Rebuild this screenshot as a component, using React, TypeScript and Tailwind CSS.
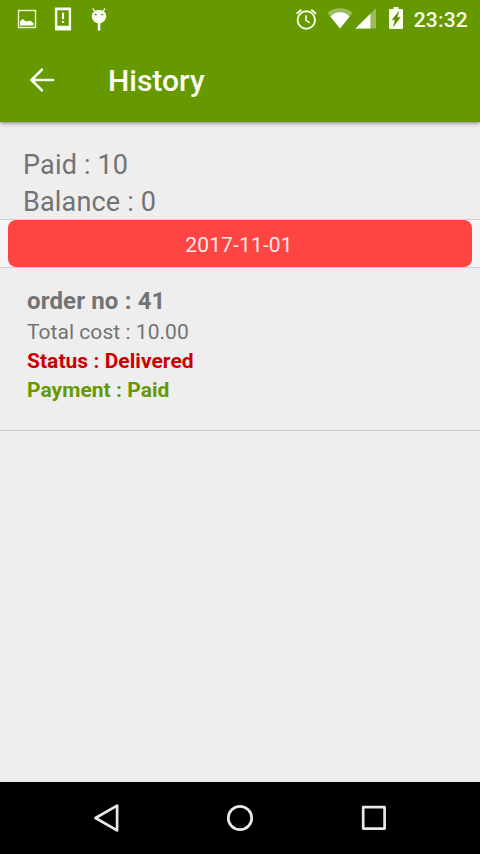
import type { ReactNode } from 'react'

interface Order {
    id: number
    total: string
    status: string
    payment: string
}

const orders: Order[] = [{ id: 41, total: '10.00', status: 'Delivered', payment: 'Paid' }]

function ImageIcon() {
    return (
        <svg width="36" height="36" viewBox="0 0 36 36" fill="none">
            <rect x="9.5" y="10.5" width="17" height="17" stroke="#eef8d8" strokeWidth="1.4" />
            <path d="M11 25.500v-3.500q1.300-3.200 3.200-2.800 1.400.2 2 2.200 1.300-.9 2.200 0l2.600-1 3.500 2.500v2.600z" fill="#fbfff2" />
        </svg>
    )
}

function DeviceAlertIcon() {
    return (
        <svg width="36" height="36" viewBox="0 0 36 36" fill="#fbfff2">
            <path fillRule="evenodd" d="M10.500 7.500h15a.6.6 0 0 1 .6.6v21.800a.6.6 0 0 1-.6.6h-15a.6.6 0 0 1-.6-.6V8.100a.6.6 0 0 1 .6-.6zM12.300 10.200v15.600h11.400V10.200z" />
            <path d="M17 12.800h2.100v6.500H17zM17 20.900h2.100V23H17z" />
        </svg>
    )
}

function DebugIcon() {
    return (
        <svg width="36" height="36" viewBox="0 0 36 36">
            <path d="M11.600 8.300l2.600 3.500M24.200 8.300l-2.600 3.500" stroke="#fbfff2" strokeWidth="1.200" />
            <path d="M18 9.900c4.300 0 7.200 2.500 7.200 6.200s-3 7.400-7.200 7.400-7.200-3.700-7.200-7.400 2.900-6.200 7.200-6.200z" fill="#fbfff2" />
            <path d="M16.800 23h2.500v7.600h-2.500z" fill="#fbfff2" />
            <path d="M13.700 14h2v1.200h-2zM20.200 14h2v1.200h-2z" fill="#4f7900" />
        </svg>
    )
}

function AlarmIcon() {
    return (
        <svg width="24" height="24" viewBox="0 0 24 24" fill="none" stroke="#f7fde9" strokeWidth="1.900">
            <circle cx="12.300" cy="13" r="8.700" />
            <path d="M12 8.300v5.100l3.700 2.300" strokeWidth="1.600" />
            <path d="M2.600 6.700l4.700-4M22 6.700l-4.700-4" />
        </svg>
    )
}

function WifiIcon() {
    return (
        <svg width="26" height="24" viewBox="0 0 26 24" fill="#ffffff">
            <path d="M13 21.600L.4 5.700C3.900 2.900 8.200 1.300 13 1.300s9.100 1.600 12.600 4.400z" fillOpacity=".35" />
            <path d="M13 21.600L3.400 9.400C5.900 6.800 9.200 5.200 13 5.200s7.100 1.600 9.600 4.200z" />
        </svg>
    )
}

function SignalIcon() {
    return (
        <svg width="22" height="24" viewBox="0 0 22 24" fill="#ffffff">
            <path d="M.5 21.600L21 1.200v20.400z" fillOpacity=".35" />
            <path d="M.5 21.600L15.400 6.700v14.900z" />
        </svg>
    )
}

function BatteryIcon() {
    return (
        <svg width="16" height="24" viewBox="0 0 16 24">
            <path d="M5.500 0h5v2.100h3.600c.5 0 .9.400.9.900v18c0 .5-.4.900-.9.900H1.900c-.5 0-.9-.4-.9-.9V3c0-.5.4-.9.900-.9h3.600z" fill="#fbfff2" />
            <path d="M10.800 4.600L4 12.800h3.200l-1.800 6.600L12.300 10.400H9z" fill="#5c8c00" stroke="#5c8c00" strokeWidth=".5" />
        </svg>
    )
}

function StatusBar() {
    return (
        <div className="flex h-[38px] justify-between pl-[9px] pr-3">
            <div className="flex">
                <ImageIcon />
                <DeviceAlertIcon />
                <DebugIcon />
            </div>
            <div className="flex pt-[7px]">
                <AlarmIcon />
                <div className="ml-[9px] flex gap-[2px]">
                    <WifiIcon />
                    <SignalIcon />
                </div>
                <div className="ml-[11px]">
                    <BatteryIcon />
                </div>
                <span className="ml-[10px] text-[21px] leading-[26px] font-medium tracking-[0.2px] text-[#f8fdea]">23:32</span>
            </div>
        </div>
    )
}

function Toolbar() {
    return (
        <div className="flex h-[84px] items-center pl-[29px]">
            <svg width="27" height="27" viewBox="0 0 27 27" fill="none" stroke="#fbfff2" strokeWidth="2.600">
                <path d="M25 13H3M13.700 1.800L2.500 13l11.200 11.200" />
            </svg>
            <h1 className="ml-[52px] pt-0.5 text-[30px] leading-9 font-medium text-[#fbfff2]">History</h1>
        </div>
    )
}

function NavButton({ children }: { children: ReactNode }) {
    return (
        <button className="flex h-[72px] w-[134px] items-center justify-center">
            <svg width="36" height="36" viewBox="0 0 36 36" fill="none" stroke="#e8e8e8" strokeWidth="2.700" strokeLinejoin="round">
                {children}
            </svg>
        </button>
    )
}

export default function App() {
    return (
        <div className="flex h-[854px] w-[480px] flex-col overflow-hidden bg-[#eeeeef] font-[Roboto,sans-serif] text-[#737373]">
            <header className="relative bg-[#669900] shadow-[0_1px_4px_rgba(0,0,0,0.5)]">
                <StatusBar />
                <Toolbar />
            </header>

            <main className="flex-1">
                <div className="h-[97px] pt-[25px] pl-[23px] text-[27px] leading-[37px] tracking-[0.17px]">
                    <p>Paid : 10</p>
                    <p>Balance : 0</p>
                </div>

                <div className="border-y border-[#d0d0d1] bg-[#f5f5f5] px-2">
                    <div className="h-[47px] rounded-lg bg-[#ff4444] pr-[2px] text-center text-[21px] leading-[50px] tracking-[0.15px] text-[#fbe9e9]">
                        2017-11-01
                    </div>
                </div>

                {orders.map((order) => (
                    <div key={order.id} className="h-[163px] border-b border-[#d0d0d1] pt-[18px] pl-[27px] text-[21px] leading-[29px] tracking-[0.04px]">
                        <p className="mb-0.5 text-2xl leading-[30px] font-bold tracking-[0.15px]">order no : {order.id}</p>
                        <p>Total cost : {order.total}</p>
                        <p className="font-bold text-[#cc0000]">Status : {order.status}</p>
                        <p className="font-bold text-[#669900]">Payment : {order.payment}</p>
                    </div>
                ))}
            </main>

            <nav className="flex h-[72px] justify-center bg-black">
                <NavButton>
                    <path d="M28.800 5.600v24.800L7.200 18z" transform="translate(.3 0)" />
                </NavButton>
                <NavButton>
                    <circle cx="18" cy="18" r="11.700" />
                </NavButton>
                <NavButton>
                    <rect x="7.200" y="7.200" width="21.400" height="21.400" />
                </NavButton>
            </nav>
        </div>
    )
}
